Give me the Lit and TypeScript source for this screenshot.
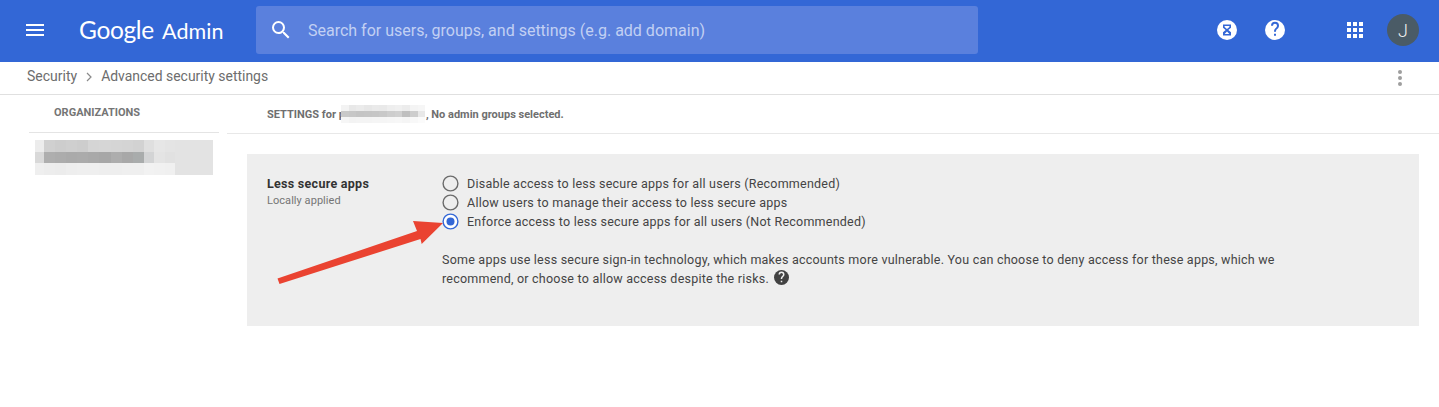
import { LitElement, html, css, svg } from "lit";
import { customElement } from "lit/decorators.js";

const orgPixels: string[][] = [
  ["#ececec","#d0d0d0","#cdcdcd","#cfcfcf","#cdcdcd","#d5d5d5","#d6d6d6","#d5d5d5","#d4d4d4","#d2d2d2","#dfdfdf","#e6e6e6","#e4e4e4","#e3e3e3"],
  ["#d9d9d9","#aeaeae","#acacac","#aaaaaa","#ababab","#a9a9a9","#a7a7a7","#adadad","#a8a8a8","#a9acac","#d3d4d5","#e4e4e4","#e1e1e1","#e3e3e3"],
  ["#efefef","#ededed","#ececec","#eeeeee","#efefef","#efefef","#eeeeee","#eeeeee","#efefef","#efefef","#f2f2f2","#f1f1f1","#f0f0f0","#e3e3e3"],
];
const domainPixels: string[][] = [
  ["#f3f3f3","#e8e8e8","#ebebeb","#e7e7e7","#eaeaea","#e9e9e9","#eeeeee","#f0f0f0","#ececec","#f4f4f4","#f6f6f6"],
  ["#c9c9c9","#c7c7c7","#c4c4c4","#c5c5c5","#c6c6c6","#c8c8c8","#cdcdcd","#d0d0d0","#bfbfbf","#cdcdcd","#e8e8e8"],
  ["#f6f6f6","#f3f3f3","#f4f4f4","#f4f4f4","#f5f5f5","#f5f5f5","#f6f6f6","#f7f7f7","#f5f5f5","#f8f8f8","#fbfbfb"],
];

const options = [
  { label: "Disable access to less secure apps for all users (Recommended)", on: false },
  { label: "Allow users to manage their access to less secure apps", on: false },
  { label: "Enforce access to less secure apps for all users (Not Recommended)", on: true },
];

@customElement("app-root")
export class AppRoot extends LitElement {
  static styles = css`
    :host { display: block; width: 1439px; height: 407px; overflow: hidden; position: relative; background: #fff; font-family: Roboto, "Liberation Sans", sans-serif; color: #444; }
    .top { height: 62px; box-sizing: border-box; padding-bottom: 2px; background: #3367d6; display: flex; align-items: center; color: #fff; }
    .menu { width: 24px; height: 24px; margin-left: 23px; flex: none; }
    .logo { margin-left: 32px; width: 177px; flex: none; display: flex; align-items: baseline; white-space: nowrap; margin-top: -2px; font-family: Lato, sans-serif; }
    .g { font-size: 24.5px; letter-spacing: -0.35px; width: 83px; }
    .a { font-size: 21.5px; letter-spacing: 0.1px; }
    .search { width: 722px; height: 48px; flex: none; box-sizing: border-box; background: #5a80dd; border-radius: 3px; display: flex; align-items: center; padding-left: 13px; gap: 15px; color: #c2d0f3; font-size: 16px; }
    .search svg { width: 24px; height: 24px; flex: none; }
    .right { margin-left: auto; display: flex; align-items: center; margin-right: 20px; }
    .hg { width: 20px; height: 20px; }
    .q { width: 20px; height: 20px; margin-left: 28px; }
    .apps { width: 16px; height: 16px; margin-left: 62px; }
    .av { width: 32px; height: 32px; border-radius: 50%; background: #4a5b66; margin-left: 24px; display: flex; align-items: center; justify-content: center; font-size: 18px; color: #f0f0f0; font-weight: 300; }
    .crumb { box-sizing: border-box; border-bottom: 1px solid #e0e0e0; height: 33px; display: flex; align-items: center; padding: 0 32px 5px 27px; font-size: 14px; color: #6d6d6d; }
    .crumb .sep { width: 14px; height: 14px; margin: 2px 5px 0 5px; }
    .crumb .cur { font-size: 13.95px; }
    .dots { margin-left: auto; width: 6px; height: 18px; margin-top: 5px; margin-right: 4px; }
    .main { display: flex; }
    .side { width: 227px; flex: none; box-sizing: border-box; padding-left: 29px; }
    .side h2 { margin: 0; width: 190px; box-sizing: border-box; height: 38px; padding: 11px 0 0 25px; border-bottom: 1px solid #e4e4e4; font-size: 11px; line-height: 14px; font-weight: 700; color: #757575; }
    .orgblur { margin: 7px 0 0 6px; display: grid; grid-template-columns: 9px repeat(9, 11.1px) repeat(3, 10.33px) 38px; grid-auto-rows: 11.5px; width: 178px; }
    .content { flex: 1; min-width: 0; }
    .sethead { height: 39px; box-sizing: border-box; border-bottom: 1px solid #e8e8e8; padding: 13px 0 0 40px; font-size: 11px; line-height: 13px; font-weight: 700; color: #6f6f6f; display: flex; white-space: pre; }
    .domblur { display: grid; grid-template-columns: repeat(11, 7.7px); grid-auto-rows: 6px; margin: -3px 0 0 -4px; width: 85px; height: 18px; flex: none; }
    .card { margin: 20px 20px 0 20px; height: 172px; box-sizing: border-box; background: #eeeeee; padding: 20px 20px 0 20px; display: flex; position: relative; }
    .lab { width: 175px; flex: none; margin-top: 2px; }
    .lab b { display: block; font-size: 12.5px; line-height: 15px; font-weight: 700; color: #333; letter-spacing: 0.28px; }
    .lab span { display: block; margin-top: 3px; font-size: 11px; line-height: 14px; color: #757575; letter-spacing: 0.05px; }
    .opts { flex: 1; min-width: 0; font-size: 12.5px; color: #444; }
    .opt { display: flex; align-items: center; height: 19px; gap: 8px; white-space: nowrap; letter-spacing: 0.23px; }
    .r { width: 17px; height: 17px; flex: none; }
    .desc { margin: 19px 0 0 0; width: 880px; font-size: 12.5px; line-height: 19px; letter-spacing: 0.225px; color: #444; }
    .qs { width: 15px; height: 15px; vertical-align: -2px; margin-left: 2px; }
    .arrow { position: absolute; left: 270px; top: 220px; width: 180px; height: 70px; pointer-events: none; }
  `;

  private blur(rows: string[][], cls: string) {
    return html`<div class=${cls}>${rows.flat().map((c) => html`<i style="background:${c}"></i>`)}</div>`;
  }

  private radio(on: boolean) {
    return on
      ? html`<svg class="r" viewBox="0 0 17 17"><circle cx="8.5" cy="8.5" r="7.4" fill="#fff" stroke="#3367d6" stroke-width="1.4"/><circle cx="8.5" cy="8.5" r="4" fill="#3367d6"/></svg>`
      : html`<svg class="r" viewBox="0 0 17 17"><circle cx="8.5" cy="8.5" r="7.4" fill="#eee" stroke="#6b6b6b" stroke-width="1.4"/></svg>`;
  }

  render() {
    return html`
      <div class="top">
        <svg class="menu" viewBox="0 0 24 24" fill="#fff"><path d="M3 18h18v-2H3v2zm0-5h18v-2H3v2zm0-7v2h18V6H3z"/></svg>
        <div class="logo"><span class="g">Google</span><span class="a">Admin</span></div>
        <div class="search">
          <svg viewBox="0 0 24 24" fill="#fff"><path d="M15.5 14h-.79l-.28-.27A6.47 6.47 0 0 0 16 9.5 6.5 6.5 0 1 0 9.5 16c1.61 0 3.09-.59 4.23-1.57l.27.28v.79l5 4.99L20.49 19l-4.99-5zm-6 0C7.01 14 5 11.99 5 9.5S7.01 5 9.5 5 14 7.01 14 9.5 11.99 14 9.5 14z"/></svg>
          <span>Search for users, groups, and settings (e.g. add domain)</span>
        </div>
        <div class="right">
          <svg class="hg" viewBox="0 0 20 20"><circle cx="10" cy="10" r="10" fill="#fff"/><path d="M6 4.5h8v3.2L11.3 10l2.7 2.3v3.2H6v-3.2L8.7 10 6 7.7z" fill="#3367d6"/><path d="M7.6 6h4.8v1L10 9 7.6 7zM7.6 14l2.4-2.6 2.4 2.6z" fill="#fff"/></svg>
          <svg class="q" viewBox="0 0 24 24"><circle cx="12" cy="12" r="12" fill="#fff"/><path fill="#3367d6" d="M13.2 19h-2.4v-2.4h2.4V19zm2.5-9.2-1.1 1.1c-.9.9-1.4 1.6-1.4 3.3h-2.4v-.6c0-1.3.5-2.5 1.4-3.4l1.5-1.5c.4-.4.7-1 .7-1.7a2.4 2.4 0 1 0-4.8 0H7.2a4.8 4.8 0 1 1 9.6 0c0 1.1-.4 2-1.1 2.8z"/></svg>
          <svg class="apps" viewBox="0 0 16 16" fill="#fff">${[0, 6, 12].flatMap((y) => [0, 6, 12].map((x) => svg`<rect x=${x} y=${y} width="4" height="4"/>`))}</svg>
          <div class="av">J</div>
        </div>
      </div>
      <div class="crumb">
        <span>Security</span>
        <svg class="sep" viewBox="0 0 14 14" fill="none" stroke="#8a8a8a" stroke-width="1.2"><path d="M5 3l4 4-4 4"/></svg>
        <span class="cur">Advanced security settings</span>
        <svg class="dots" viewBox="0 0 6 18" fill="#9e9e9e"><circle cx="3" cy="3" r="2"/><circle cx="3" cy="9" r="2"/><circle cx="3" cy="15" r="2"/></svg>
      </div>
      <div class="main">
        <div class="side">
          <h2>ORGANIZATIONS</h2>
          ${this.blur(orgPixels, "orgblur")}
        </div>
        <div class="content">
          <div class="sethead"><span>SETTINGS for p</span>${this.blur(domainPixels, "domblur")}<span>, No admin groups selected.</span></div>
          <div class="card">
            <div class="lab"><b>Less secure apps</b><span>Locally applied</span></div>
            <div class="opts">
              ${options.map((o) => html`<div class="opt">${this.radio(o.on)}<span>${o.label}</span></div>`)}
              <p class="desc">Some apps use less secure sign-in technology, which makes accounts more vulnerable. You can choose to deny access for these apps, which we recommend, or choose to allow access despite the risks. <svg class="qs" viewBox="0 0 24 24"><circle cx="12" cy="12" r="12" fill="#424242"/><path fill="#eee" d="M13.2 19.5h-2.4v-2.4h2.4v2.4zm2.5-9.5-1.1 1.1c-.9.9-1.4 1.6-1.4 3.3h-2.4v-.6c0-1.3.5-2.5 1.4-3.4l1.5-1.5c.4-.4.7-1 .7-1.7a2.4 2.4 0 1 0-4.8 0H7.2a4.8 4.8 0 1 1 9.6 0c0 1.1-.4 2-1.1 2.8z"/></svg></p>
            </div>
          </div>
        </div>
      </div>
      <svg class="arrow" viewBox="0 0 180 70"><path d="M7.5 58.5 L147 11 L143 1 L173 3 L151.7 24 L150.5 19 L9.5 64 Z" fill="#ea4331"/></svg>
    `;
  }
}
